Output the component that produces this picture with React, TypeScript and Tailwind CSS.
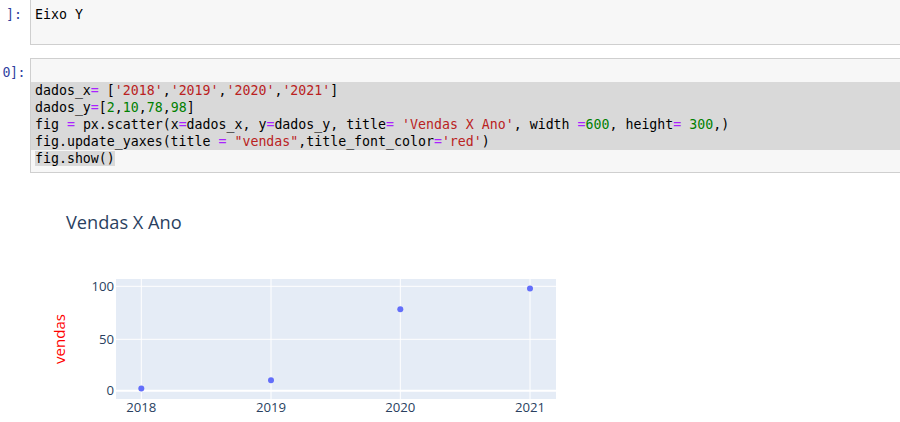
import React from "react";

const mono = { fontFamily: '"DejaVu Sans Mono", "Liberation Mono", monospace' };

const O = ({ children }: { children: React.ReactNode }) => <span className="text-[#aa22ff]">{children}</span>;
const S = ({ children }: { children: React.ReactNode }) => <span className="text-[#ba2121]">{children}</span>;
const N = ({ children }: { children: React.ReactNode }) => <span className="text-[#008000]">{children}</span>;

function Prompt({ text, tight }: { text: string; tight?: boolean }) {
  return (
    <div
      className={
        tight
          ? "w-[30px] shrink-0 flex justify-end pr-[5px] pt-[6px] h-[23px] text-[#303f9f] whitespace-nowrap leading-[17px] tracking-[-0.5px]"
          : "w-[30px] shrink-0 flex justify-end pr-[8px] pt-[6px] h-[23px] text-[#303f9f] whitespace-nowrap leading-[17px]"
      }
    >
      {text}
    </div>
  );
}

function Chart() {
  const xs = [111.3, 241, 370.3, 500];
  const ys = [2, 10, 78, 98];
  const yOf = (v: number) => 195.7 - v * 1.044;
  const labels = ["2018", "2019", "2020", "2021"];
  const font = '"Open Sans", "Noto Sans", sans-serif';
  return (
    <svg width="620" height="230" viewBox="0 0 620 230" style={{ fontFamily: font }}>
      <text x="36" y="34" fontSize="18.2" fill="#2a3f5f">Vendas X Ano</text>
      <rect x="86" y="84" width="440" height="120" fill="#e5ecf6" />
      {[91.3, 144.3].map((y) => (
        <line key={y} x1="86" x2="526" y1={y} y2={y} stroke="#ffffff" strokeWidth="1" />
      ))}
      {xs.map((x) => (
        <line key={x} x1={x} x2={x} y1="84" y2="204" stroke="#ffffff" strokeWidth="1" />
      ))}
      <line x1="86" x2="526" y1="195.7" y2="195.7" stroke="#ffffff" strokeWidth="2" />
      {xs.map((x, i) => (
        <circle key={i} cx={x} cy={yOf(ys[i])} r="3" fill="#636efa" />
      ))}
      {[["100", 91.3], ["50", 144.3], ["0", 195.7]].map(([t, y]) => (
        <text key={t as string} x="84" y={(y as number) + 4.7} fontSize="13.2" fill="#2a3f5f" textAnchor="end">
          {t}
        </text>
      ))}
      {xs.map((x, i) => (
        <text key={i} x={x} y="216.7" fontSize="13.2" fill="#2a3f5f" textAnchor="middle">
          {labels[i]}
        </text>
      ))}
      <text x="35" y="144" fontSize="15" fill="red" textAnchor="middle" transform="rotate(-90 35 144)">
        vendas
      </text>
    </svg>
  );
}

export default function App() {
  return (
    <div className="w-[900px] h-[422px] overflow-hidden bg-white text-[13.25px] text-black" style={mono}>
      <div className="flex">
        <Prompt text="]:" />
        <div className="w-[880px] shrink-0 h-[45px] bg-[#f7f7f7] border-x border-b border-[#cfcfcf] pl-[4px] pt-[6px] leading-[17px] whitespace-pre">
          Eixo Y
        </div>
      </div>
      <div className="flex mt-[13px]">
        <Prompt text="0]:" tight />
        <div className="w-[880px] shrink-0 bg-[#f7f7f7] border border-[#cfcfcf] pt-[6px] pb-[5px] leading-[17px] whitespace-pre">
          <div className="h-[17px]" />
          <div className="pl-[4px] bg-[#d9d9d9]">
            <div>dados_x<O>=</O> [<S>'2018'</S>,<S>'2019'</S>,<S>'2020'</S>,<S>'2021'</S>]</div>
            <div>dados_y<O>=</O>[<N>2</N>,<N>10</N>,<N>78</N>,<N>98</N>]</div>
            <div>
              fig <O>=</O> px.scatter(x<O>=</O>dados_x, y<O>=</O>dados_y, title<O>=</O> <S>'Vendas X Ano'</S>, width <O>=</O><N>600</N>, height<O>=</O> <N>300</N>,)
            </div>
            <div>fig.update_yaxes(title <O>=</O> <S>"vendas"</S>,title_font_color<O>=</O><S>'red'</S>)</div>
          </div>
          <div className="pl-[4px]">
            <span className="bg-[#d9d9d9]">fig.show()</span>
          </div>
        </div>
      </div>
      <div className="flex mt-[22px]">
        <div className="w-[30px] shrink-0" />
        <Chart />
      </div>
    </div>
  );
}
